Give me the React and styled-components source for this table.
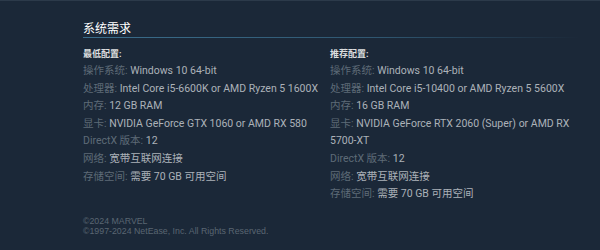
import React from "react";
import styled, { createGlobalStyle } from "styled-components";

const GlobalStyle = createGlobalStyle`
  html, body { margin: 0; padding: 0; background: #1b2838; }
  body { font-family: Roboto, "Noto Sans CJK SC", sans-serif; }
`;

const Page = styled.div`
  width: 600px;
  height: 250px;
  box-sizing: border-box;
  background: #1b2838;
  border-top: 1px solid #2c3a4a;
  padding: 0 30px 0 83px;
  overflow: hidden;
`;

const Heading = styled.h2`
  margin: 20px 0 0;
  font-family: Roboto, "Noto Sans CJK SC", sans-serif;
  font-size: 12px;
  font-weight: 400;
  line-height: 16px;
  color: #ffffff;
`;

const Rule = styled.div`
  height: 1px;
  margin-right: -10px;
  background: linear-gradient(90deg, #3b6e8c 0%, #2f5670 60%, rgba(47, 86, 112, 0) 100%);
`;

const Columns = styled.div`
  display: grid;
  grid-template-columns: 247px 240px;
  margin-top: 10px;
`;

const Column = styled.div`
  display: flex;
  flex-direction: column;
`;

const SubHeading = styled.div`
  font-size: 9px;
  font-weight: 700;
  line-height: 12px;
  color: #dcdedf;
  margin-bottom: 2px;
`;

const List = styled.ul`
  list-style: none;
  margin: 0;
  padding: 0;
`;

const Item = styled.li`
  font-size: 10.5px;
  line-height: 17.6px;
  color: #acb2b8;
`;

const Label = styled.span`
  color: #5e6b77;
`;

const Footer = styled.div`
  margin-top: 13px;
  font-family: "Liberation Sans", Arial, sans-serif;
  font-size: 8.8px;
  line-height: 10px;
  color: #5a6672;
`;

const minimum = [
  ["操作系统:", "Windows 10 64-bit"],
  ["处理器:", "Intel Core i5-6600K or AMD Ryzen 5 1600X"],
  ["内存:", "12 GB RAM"],
  ["显卡:", "NVIDIA GeForce GTX 1060 or AMD RX 580"],
  ["DirectX 版本:", "12"],
  ["网络:", "宽带互联网连接"],
  ["存储空间:", "需要 70 GB 可用空间"],
];

const recommended = [
  ["操作系统:", "Windows 10 64-bit"],
  ["处理器:", "Intel Core i5-10400 or AMD Ryzen 5 5600X"],
  ["内存:", "16 GB RAM"],
  ["显卡:", "NVIDIA GeForce RTX 2060 (Super) or AMD RX 5700-XT"],
  ["DirectX 版本:", "12"],
  ["网络:", "宽带互联网连接"],
  ["存储空间:", "需要 70 GB 可用空间"],
];

function ReqColumn({ title, rows }) {
  return (
    <Column>
      <SubHeading>{title}</SubHeading>
      <List>
        {rows.map(([label, value]) => (
          <Item key={label}>
            <Label>{label}</Label> {value}
          </Item>
        ))}
      </List>
    </Column>
  );
}

export default function App() {
  return (
    <Page>
      <GlobalStyle />
      <Heading>系统需求</Heading>
      <Rule />
      <Columns>
        <ReqColumn title="最低配置:" rows={minimum} />
        <ReqColumn title="推荐配置:" rows={recommended} />
      </Columns>
      <Footer>
        ©2024 MARVEL
        <br />
        ©1997-2024 NetEase, Inc. All Rights Reserved.
      </Footer>
    </Page>
  );
}
